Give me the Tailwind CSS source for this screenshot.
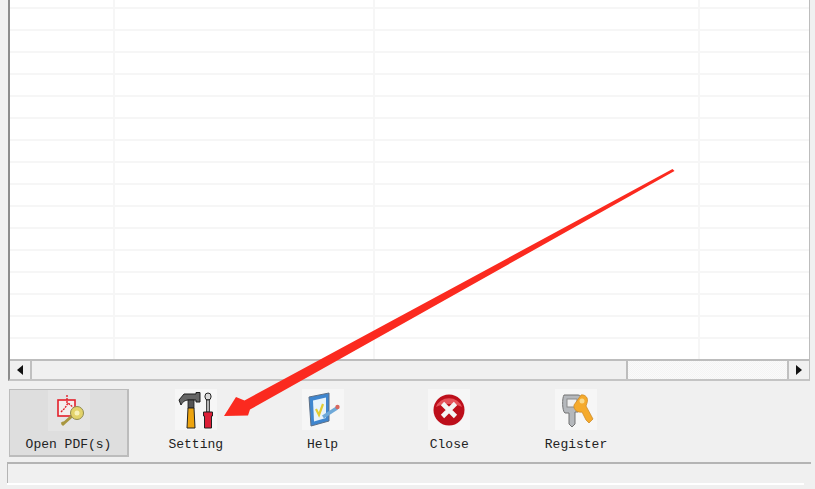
<!DOCTYPE html>
<html lang="en">
<head>
    <meta charset="UTF-8">
    <title>PDF Tool</title>
    <script src="https://cdn.jsdelivr.net/npm/@tailwindcss/browser@4"></script>
</head>
<body class="bg-[#f0f0f0] w-[815px] h-[489px] overflow-hidden relative font-['Liberation_Mono',monospace] text-[13px] text-[#222]">
    <!-- Table area -->
    <div class="ml-[8px] w-[802px] h-[381px] flex flex-col border-l-2 border-r border-b-2 border-l-[#8c8c8c] border-r-[#bdbdbd] border-b-[#c4c4c4]">
        <div class="h-[359px] bg-white overflow-hidden flex-none">
            <div class="grid grid-cols-[105px_260px_325px_1fr] auto-rows-[22px] -mt-[13px]">
                <!-- 4 columns x 17 rows -->
                <div class="border-r-2 border-b-2 border-[#f6f6f6]"></div><div class="border-r-2 border-b-2 border-[#f6f6f6]"></div><div class="border-r-2 border-b-2 border-[#f6f6f6]"></div><div class="border-b-2 border-[#f6f6f6]"></div>
                <div class="border-r-2 border-b-2 border-[#f6f6f6]"></div><div class="border-r-2 border-b-2 border-[#f6f6f6]"></div><div class="border-r-2 border-b-2 border-[#f6f6f6]"></div><div class="border-b-2 border-[#f6f6f6]"></div>
                <div class="border-r-2 border-b-2 border-[#f6f6f6]"></div><div class="border-r-2 border-b-2 border-[#f6f6f6]"></div><div class="border-r-2 border-b-2 border-[#f6f6f6]"></div><div class="border-b-2 border-[#f6f6f6]"></div>
                <div class="border-r-2 border-b-2 border-[#f6f6f6]"></div><div class="border-r-2 border-b-2 border-[#f6f6f6]"></div><div class="border-r-2 border-b-2 border-[#f6f6f6]"></div><div class="border-b-2 border-[#f6f6f6]"></div>
                <div class="border-r-2 border-b-2 border-[#f6f6f6]"></div><div class="border-r-2 border-b-2 border-[#f6f6f6]"></div><div class="border-r-2 border-b-2 border-[#f6f6f6]"></div><div class="border-b-2 border-[#f6f6f6]"></div>
                <div class="border-r-2 border-b-2 border-[#f6f6f6]"></div><div class="border-r-2 border-b-2 border-[#f6f6f6]"></div><div class="border-r-2 border-b-2 border-[#f6f6f6]"></div><div class="border-b-2 border-[#f6f6f6]"></div>
                <div class="border-r-2 border-b-2 border-[#f6f6f6]"></div><div class="border-r-2 border-b-2 border-[#f6f6f6]"></div><div class="border-r-2 border-b-2 border-[#f6f6f6]"></div><div class="border-b-2 border-[#f6f6f6]"></div>
                <div class="border-r-2 border-b-2 border-[#f6f6f6]"></div><div class="border-r-2 border-b-2 border-[#f6f6f6]"></div><div class="border-r-2 border-b-2 border-[#f6f6f6]"></div><div class="border-b-2 border-[#f6f6f6]"></div>
                <div class="border-r-2 border-b-2 border-[#f6f6f6]"></div><div class="border-r-2 border-b-2 border-[#f6f6f6]"></div><div class="border-r-2 border-b-2 border-[#f6f6f6]"></div><div class="border-b-2 border-[#f6f6f6]"></div>
                <div class="border-r-2 border-b-2 border-[#f6f6f6]"></div><div class="border-r-2 border-b-2 border-[#f6f6f6]"></div><div class="border-r-2 border-b-2 border-[#f6f6f6]"></div><div class="border-b-2 border-[#f6f6f6]"></div>
                <div class="border-r-2 border-b-2 border-[#f6f6f6]"></div><div class="border-r-2 border-b-2 border-[#f6f6f6]"></div><div class="border-r-2 border-b-2 border-[#f6f6f6]"></div><div class="border-b-2 border-[#f6f6f6]"></div>
                <div class="border-r-2 border-b-2 border-[#f6f6f6]"></div><div class="border-r-2 border-b-2 border-[#f6f6f6]"></div><div class="border-r-2 border-b-2 border-[#f6f6f6]"></div><div class="border-b-2 border-[#f6f6f6]"></div>
                <div class="border-r-2 border-b-2 border-[#f6f6f6]"></div><div class="border-r-2 border-b-2 border-[#f6f6f6]"></div><div class="border-r-2 border-b-2 border-[#f6f6f6]"></div><div class="border-b-2 border-[#f6f6f6]"></div>
                <div class="border-r-2 border-b-2 border-[#f6f6f6]"></div><div class="border-r-2 border-b-2 border-[#f6f6f6]"></div><div class="border-r-2 border-b-2 border-[#f6f6f6]"></div><div class="border-b-2 border-[#f6f6f6]"></div>
                <div class="border-r-2 border-b-2 border-[#f6f6f6]"></div><div class="border-r-2 border-b-2 border-[#f6f6f6]"></div><div class="border-r-2 border-b-2 border-[#f6f6f6]"></div><div class="border-b-2 border-[#f6f6f6]"></div>
                <div class="border-r-2 border-b-2 border-[#f6f6f6]"></div><div class="border-r-2 border-b-2 border-[#f6f6f6]"></div><div class="border-r-2 border-b-2 border-[#f6f6f6]"></div><div class="border-b-2 border-[#f6f6f6]"></div>
                <div class="border-r-2 border-b-2 border-[#f6f6f6]"></div><div class="border-r-2 border-b-2 border-[#f6f6f6]"></div><div class="border-r-2 border-b-2 border-[#f6f6f6]"></div><div class="border-b-2 border-[#f6f6f6]"></div>
            </div>
        </div>
        <!-- Horizontal scrollbar -->
        <div class="h-[20px] flex flex-none border-t-2 border-[#bdbdbd] bg-[repeating-conic-gradient(#f4f4f4_0_25%,#fafafa_0_50%)] bg-[length:2px_2px]">
            <div class="w-[22px] flex items-center justify-center bg-[#f0f0f0] border-r-2 border-[#c0c0c0]">
                <svg width="6" height="10" viewBox="0 0 6 10"><path d="M6 0V10L0 5Z" fill="#111"/></svg>
            </div>
            <div class="w-[596px] bg-[#f0f0f0] border-r-2 border-[#bdbdbd]"></div>
            <div class="flex-1"></div>
            <div class="w-[22px] flex items-center justify-center bg-[#f0f0f0] border-l-2 border-[#c0c0c0]">
                <svg width="6" height="10" viewBox="0 0 6 10"><path d="M0 0V10L6 5Z" fill="#111"/></svg>
            </div>
        </div>
    </div>

    <!-- Toolbar -->
    <div class="flex gap-[6.75px] ml-[9px] mt-[8px] h-[68px]">
        <div class="w-[120px] flex flex-col items-center bg-[#dedede] border-b-2 border-r-2 border-t border-l border-[#bcbcbc]">
            <div class="w-[42px] h-[41px] bg-[#e4e4e4] flex items-center justify-center">
                <svg class="blur-[0.4px]" width="38" height="38" viewBox="0 0 38 38">
                    <rect x="8" y="8" width="17" height="16" fill="#f4eeee" stroke="#e3202a" stroke-width="1.6"/>
                    <path d="M17 3V13M11 20L15 16L18 11L24 16" fill="none" stroke="#e3202a" stroke-width="1.4" stroke-dasharray="2 1"/>
                    <path d="M12 33L22 24M14 33L12 30" stroke="#a8963f" stroke-width="3"/>
                    <circle cx="27" cy="21" r="6.500" fill="#e3d36a" stroke="#8f8a50"/>
                    <circle cx="27" cy="21" r="2.500" fill="#f8f2b8"/>
                </svg>
            </div>
            <span class="leading-[17px] mt-[5px]">Open PDF(s)</span>
        </div>
        <div class="w-[120px] flex flex-col items-center">
            <div class="w-[42px] h-[41px] bg-[#f6f6f6] flex items-center justify-center">
                <svg class="blur-[0.4px]" width="38" height="38" viewBox="0 0 38 38">
                    <path d="M2 9L7 3H19V1.500H23V11H19V9H12C9 9 6 10 4 14Z" fill="#666" stroke="#1c1c1c"/>
                    <rect x="11" y="9" width="6" height="8" fill="#555" stroke="#1c1c1c" stroke-width=".8"/>
                    <path d="M11 17H17L18 37H10Z" fill="#eda40f" stroke="#222"/>
                    <rect x="28" y="2" width="6" height="7" rx="3" fill="#d8d8d8" stroke="#222"/>
                    <rect x="29.500" y="9" width="3" height="12" fill="#b5b5b5" stroke="#222" stroke-width=".8"/>
                    <path d="M26.500 21H35.500V25H34.500V37H27.500V25H26.500Z" fill="#dc1f37" stroke="#222"/>
                </svg>
            </div>
            <span class="leading-[17px] mt-[6px]">Setting</span>
        </div>
        <div class="w-[120px] flex flex-col items-center">
            <div class="w-[42px] h-[41px] bg-[#f6f6f6] flex items-center justify-center">
                <svg class="blur-[0.4px]" width="36" height="36" viewBox="0 0 36 36">
                    <path d="M4 5L24 1V29L6 34Z" fill="#3f86cf" stroke="#5c6f86"/>
                    <path d="M8 8.500L21 5.500V26L9 29.500Z" fill="#e8f3fb"/>
                    <path d="M11 17L14 23L18 12" fill="none" stroke="#e2cc33" stroke-width="2.200"/>
                    <path d="M18 25L32 16" stroke="#6fa9d8" stroke-width="3.600"/>
                    <circle cx="32.500" cy="15" r="2.200" fill="#d8685f"/>
                </svg>
            </div>
            <span class="leading-[17px] mt-[6px]">Help</span>
        </div>
        <div class="w-[120px] flex flex-col items-center">
            <div class="w-[42px] h-[41px] bg-[#f6f6f6] flex items-center justify-center">
                <svg class="blur-[0.4px]" width="32" height="32" viewBox="0 0 32 32">
                    <circle cx="16" cy="16" r="15.500" fill="#bd0f1b"/>
                    <path d="M3 13A13.500 12 0 0 1 29 13C22 9 10 9 3 13Z" fill="#e5525a"/>
                    <path d="M9.500 9.500L22.500 22.500M22.500 9.500L9.500 22.500" stroke="#f4f4f4" stroke-width="4.600"/>
                </svg>
            </div>
            <span class="leading-[17px] mt-[6px]">Close</span>
        </div>
        <div class="w-[120px] flex flex-col items-center">
            <div class="w-[42px] h-[41px] bg-[#f6f6f6] flex items-center justify-center">
                <svg class="blur-[0.4px]" width="36" height="38" viewBox="0 0 36 38">
                    <path d="M6 4H20C24 4 24 10 23 14L20 21H17V33L14 36L11 33V22H7C4 20 4 7 6 4Z" fill="#b5b8bc" stroke="#737373"/>
                    <rect x="9" y="8" width="10" height="8" fill="#f0f0f0" stroke="#8a8a8a"/>
                    <path d="M16 14L23 4C27 3 31 7 29 12L28 15L35 28L31 32L28 29L24 21C20 22 15 19 16 14Z" fill="#f5aa2c" stroke="#c98420" stroke-width=".7"/>
                    <circle cx="24" cy="10" r="2.500" fill="#f9d98a"/>
                </svg>
            </div>
            <span class="leading-[17px] mt-[6px]">Register</span>
        </div>
    </div>

    <!-- Status bar -->
    <div class="ml-[7px] mt-[5px] w-[804px] h-[21px] border-t-2 border-l border-[#b4b4b4]"></div>
    <div class="ml-[7px] w-[797px] h-[2px] bg-white"></div>

    <!-- Red annotation arrow -->
    <svg class="absolute left-0 top-0 pointer-events-none" width="815" height="489" viewBox="0 0 815 489">
        <path d="M672.500 169L674.500 171L250 409.500L248 415.500L224 416L236 397L244.500 400.500Z" fill="#fb2a1f"/>
    </svg>
</body>
</html>
